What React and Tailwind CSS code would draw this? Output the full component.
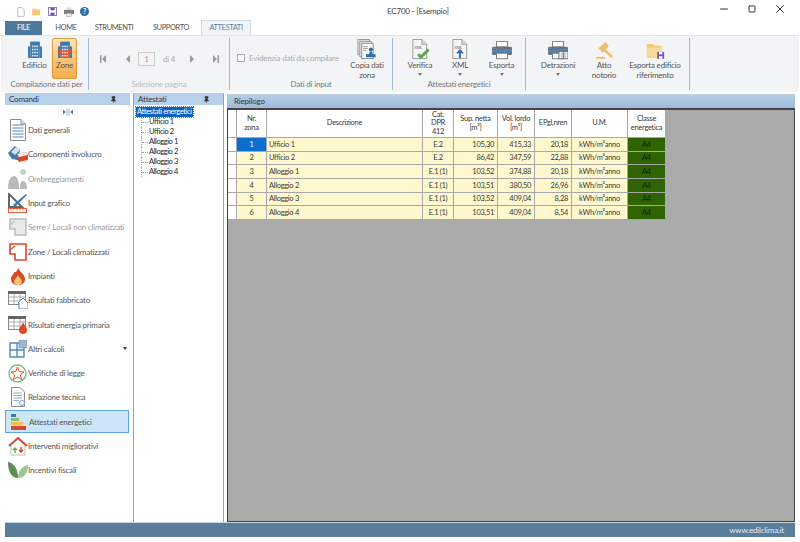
import React from "react";
import { Pin, Minus, Square, X } from "lucide-react";

const sans = "font-['Lato','Open_Sans',sans-serif] tracking-[-0.2px]";

// ---- icons ----
const Building = ({ zone }) => (
  <svg width="14" height="17" viewBox="0 0 18 22">
    <rect x="3" y="1" width="12" height="21" fill={zone ? "#d9542b" : "#3e79ad"} />
    <rect x="3" y="1" width="12" height="10" fill="#3e79ad" />
    <rect x="0" y="7" width="3" height="15" fill="#3e79ad" />
    <rect x="15" y="7" width="3" height="15" fill="#3e79ad" />
    {zone && <rect x="0" y="11" width="18" height="5" fill="#d9542b" />}
    {[5, 8, 11].map((x) =>
      [6, 10, 14, 18].map((y) => <rect key={`${x}-${y}`} x={x} y={y} width="2" height="2" fill="#e8eef5" />)
    )}
  </svg>
);

const XmlDoc = ({ children }) => (
  <svg width="20" height="21" viewBox="0 0 20 22">
    <path d="M2.5 .5H12L17 5.5V20.5H2.5Z" fill="#f4f4f4" stroke="#9a9a9a" />
    <path d="M12 .5V5.5H17" fill="#ddd" stroke="#9a9a9a" />
    <text x="4" y="10" fontSize="4.5" fill="#666" fontFamily="Liberation Sans">XML</text>
    {children}
  </svg>
);

const Printer = ({ extra }) => (
  <svg width="20" height="19" viewBox="0 0 22 20">
    <rect x="5" y="0" width="12" height="6" fill="#fff" stroke="#777" />
    <rect x="0" y="6" width="22" height="9" rx="1.5" fill="#6b7480" />
    <rect x="0" y="9" width="22" height="3" fill="#4d86bb" />
    <rect x="5" y="13" width="12" height="6" fill="#fff" stroke="#777" />
    {extra && <rect x="12" y="11" width="10" height="8" fill="#fff" stroke="#666" />}
    {extra && <path d="M14 13H20M14 15H20M14 17H20M17 11V19" stroke="#666" strokeWidth=".7" />}
  </svg>
);

const Gavel = () => (
  <svg width="19" height="19" viewBox="0 0 22 21">
    <path d="M4 8L12 1L16 5L9 13Z" fill="#f2bd6b" />
    <path d="M11 10L20 18" stroke="#f2bd6b" strokeWidth="3" />
    <rect x="1" y="18" width="11" height="2" fill="#f2bd6b" />
  </svg>
);

const FolderSave = () => (
  <svg width="19" height="18" viewBox="0 0 22 20">
    <path d="M1 2H8L10 4H18V18H1Z" fill="#f3c879" />
    <rect x="1" y="6" width="17" height="12" fill="#f7d999" />
    <rect x="13" y="11" width="8" height="8" fill="#7d4fb3" />
    <rect x="15" y="11" width="4" height="3" fill="#fff" />
    <rect x="15" y="16" width="4" height="3" fill="#fff" />
  </svg>
);

const CopyDoc = () => (
  <svg width="20" height="21" viewBox="0 0 20 22">
    <rect x="0.5" y="0.5" width="12" height="16" fill="#e2e2e2" stroke="#999" />
    <rect x="2.5" y="2.5" width="12" height="16" fill="#eee" stroke="#999" />
    <rect x="4.5" y="4.5" width="12" height="16" fill="#fafafa" stroke="#888" />
    <path d="M6 8H11M6 10H11M6 12H9" stroke="#888" strokeWidth=".8" />
    <circle cx="14" cy="11" r="2.2" fill="#2a6fb0" />
    <path d="M13 13H15L16 16H19V19H9V16H12Z" fill="#2a6fb0" />
  </svg>
);

const Doc = () => (
  <svg width="20" height="22" viewBox="0 0 20 22">
    <path d="M2.5 .5H13L17.5 5V21.5H2.5Z" fill="#fff" stroke="#8a8a8a" />
    <path d="M13 .5V5H17.5" fill="#e6e6e6" stroke="#8a8a8a" />
    {[6, 9, 12, 15, 18].map((y) => (
      <path key={y} d={`M4.5 ${y}H15.5`} stroke="#4e88c0" />
    ))}
  </svg>
);

const Involucro = () => (
  <svg width="20" height="16" viewBox="0 0 20 16">
    <path d="M0 7L7 0L12 4L10 14L4 13Z" fill="#3f79b0" />
    <path d="M3 6L8 1L12 4L7 9Z" fill="#cfe0ef" />
    <path d="M9 8L18 6L20 9V14L11 16L9 13Z" fill="#d94a2b" />
    <path d="M9 8L18 6L20 9L11 11Z" fill="#f2f2f2" />
  </svg>
);

const Ombre = () => (
  <svg width="20" height="20" viewBox="0 0 20 20">
    <circle cx="15" cy="3" r="3" fill="#cfcfcf" />
    <path d="M0 20C0 10 3 7 6 7C9 7 11 12 11 20Z" fill="#b9b9b9" />
    <path d="M12 20C12 14 13 12 15 12C18 12 19 16 19 20Z" fill="#b9b9b9" />
  </svg>
);

const InputGrafico = () => (
  <svg width="20" height="20" viewBox="0 0 20 20">
    <path d="M1 1V14H14Z" fill="none" stroke="#666" strokeWidth="2" />
    <path d="M5 12L18 1L19 2L7 14Z" fill="#3f79b0" />
    <rect x="0.5" y="15.5" width="18" height="4" fill="#fff" stroke="#e0603a" />
    <path d="M3 16V18M6 16V18M9 16V18M12 16V18M15 16V18" stroke="#e0603a" strokeWidth=".6" />
  </svg>
);

const Pianta = ({ color, fill }) => (
  <svg width="18" height="18" viewBox="0 0 18 18">
    <path d="M1 1H17V17H6V11H1Z" fill={fill} stroke={color} strokeWidth="1.6" />
    <path d="M1 7L6 3" stroke={color} strokeWidth="1.2" />
  </svg>
);

const Flame = () => (
  <svg width="16" height="18" viewBox="0 0 16 18">
    <path d="M8 0C9 5 15 7 15 12C15 16 12 18 8 18C4 18 1 16 1 12C1 8 4 8 4 5C6 6 8 3 8 0Z" fill="#dd4b22" />
    <path d="M8 8C9 11 12 12 12 15C12 17 10 18 8 18C6 18 4 17 4 15C4 12 7 11 8 8Z" fill="#f9c27a" />
  </svg>
);

const TableIcon = ({ children }) => (
  <svg width="20" height="18" viewBox="0 0 20 18">
    <rect x="0.5" y="0.5" width="17" height="13" fill="#fff" stroke="#888" />
    <rect x="0" y="0" width="18" height="3" fill="#666" />
    <path d="M0 6H18M0 10H18M6 3V14M12 3V14" stroke="#999" strokeWidth=".8" />
    {children}
  </svg>
);

const Altri = () => (
  <svg width="18" height="18" viewBox="0 0 18 18">
    <path d="M1 3H15V17H1ZM1 10H15M8 3V17" fill="#fff" stroke="#4e88c0" strokeWidth="1.4" />
    <rect x="10" y="0" width="8" height="8" fill="#9db7d3" stroke="#7a8fa6" strokeWidth=".6" />
  </svg>
);

const Verifiche = () => (
  <svg width="19" height="19" viewBox="0 0 19 19">
    <circle cx="9.5" cy="9.5" r="8.5" fill="none" stroke="#7fb77e" strokeWidth="1.4" />
    <path d="M9.5 3L11.3 7.6L16 8L12.4 11L13.6 15.6L9.5 13L5.4 15.6L6.6 11L3 8L7.7 7.6Z" fill="#fff" stroke="#d9542b" />
  </svg>
);

const Relazione = () => (
  <svg width="16" height="20" viewBox="0 0 16 20">
    <path d="M1.5 .5H10L14.5 5V19.5H1.5Z" fill="#fff" stroke="#8a8a8a" />
    <path d="M3.5 6H12M3.5 8.5H12M3.5 11H12M3.5 13.5H9" stroke="#6b9ac8" strokeWidth=".8" />
    <circle cx="12" cy="16" r="2.5" fill="#fff" stroke="#6b9ac8" />
  </svg>
);

const Energia = () => (
  <svg width="18" height="18" viewBox="0 0 18 18">
    <rect x="1" y="1" width="5" height="3" fill="#3f79b0" />
    <rect x="1" y="5" width="8" height="3" fill="#8dbb73" />
    <rect x="1" y="9" width="12" height="3" fill="#f0b95a" />
    <rect x="1" y="13" width="15" height="4" fill="#d9482b" />
  </svg>
);

const Interventi = () => (
  <svg width="20" height="19" viewBox="0 0 20 19">
    <path d="M3 8V18H17V8" fill="#fff" stroke="#bdbdbd" />
    <path d="M1 9L10 1L19 9" fill="none" stroke="#d9482b" strokeWidth="2" />
    <path d="M7 16V11M5 13L7 11L9 13" fill="none" stroke="#6aa84f" strokeWidth="1.4" />
    <path d="M13 10V15M11 13L13 15L15 13" fill="none" stroke="#d9482b" strokeWidth="1.4" />
  </svg>
);

const Leaves = () => (
  <svg width="20" height="18" viewBox="0 0 20 18">
    <path d="M10 17C3 17 0 10 0 1C6 2 10 8 10 17Z" fill="#5d8a55" />
    <path d="M10 17C17 17 20 11 20 4C14 5 10 10 10 17Z" fill="#9cc78e" />
  </svg>
);

const NavEnd = ({ flip }) => (
  <svg width="6" height="8" viewBox="0 0 6 8" className={flip ? "rotate-180" : ""}>
    <rect x="0" y="0" width="1.5" height="8" fill="#9a9a9a" />
    <path d="M6 0V8L2 4Z" fill="#9a9a9a" />
  </svg>
);

const NavArrow = ({ flip }) => (
  <svg width="4" height="8" viewBox="0 0 4 8" className={flip ? "rotate-180" : ""}>
    <path d="M4 0V8L0 4Z" fill="#9a9a9a" />
  </svg>
);

const Caret = ({ color = "#777" }) => (
  <svg width="4" height="3" viewBox="0 0 4 3">
    <path d="M0 0H4L2 3Z" fill={color} />
  </svg>
);

// ---- ribbon ----
const RibbonBtn = ({ icon, lines, caret, w }) => (
  <div className={`flex flex-col items-center shrink-0 ${w}`}>
    <div className="h-[22px] flex items-end justify-center">{icon}</div>
    <div className="text-[8px] leading-[10px] text-center text-[#555]">
      {lines.map((l) => (
        <div key={l} className="whitespace-nowrap">{l}</div>
      ))}
      {caret && <div className="h-[8px] flex items-center justify-center"><Caret /></div>}
    </div>
  </div>
);

const Group = ({ w, label, muted, children, className = "" }) => (
  <div className={`shrink-0 flex flex-col border-r border-[#9fb6cc] my-[2px] ${w}`}>
    <div className={`h-[41px] flex ${className}`}>{children}</div>
    <div className={`h-[11px] text-[8px] leading-[11px] text-center whitespace-nowrap ${muted ? "text-[#bbb]" : "text-[#777]"}`}>{label}</div>
  </div>
);

const Ribbon = () => (
  <div className="h-[57px] mx-[1px] pl-[4px] flex bg-[#f3f4f6] border-t border-[#e2e4e7] shrink-0">
    <Group w="w-[84px]" label="Compilazione dati per" className="items-start pl-[15px] gap-[3px]">
      <div className="w-[29px] flex flex-col items-center pt-[3px]">
        <Building />
        <div className="mt-[2px] text-[8px] leading-[10px] text-[#555]">Edificio</div>
      </div>
      <div className="w-[25px] h-[41px] flex flex-col items-center pt-[2px] rounded-[2px] border border-[#d99a3c] bg-gradient-to-b from-[#fbe3bd] via-[#fcc57c] to-[#f8ab4e]">
        <Building zone />
        <div className="mt-[2px] text-[8px] leading-[10px] text-[#555]">Zone</div>
      </div>
    </Group>
    <Group w="w-[141px]" label="Selezione pagina" muted className="items-center pl-[11px]">
      <NavEnd />
      <div className="ml-[20px] flex"><NavArrow /></div>
      <div className="ml-[8px] w-[17px] h-[14px] border border-[#ccc] bg-[#f5f5f5] text-[8px] leading-[12px] text-center text-[#999]">1</div>
      <div className="ml-[8px] text-[8px] text-[#aaa] whitespace-nowrap">di 4</div>
      <div className="ml-[15px] flex"><NavArrow flip /></div>
      <div className="ml-[19px] flex"><NavEnd flip /></div>
    </Group>
    <Group w="w-[163px]" label="Dati di input" className="items-start pl-[7px]">
      <div className="flex items-center h-[40px] w-[110px] shrink-0">
        <div className="w-[8px] h-[8px] border border-[#aaa] bg-white shrink-0" />
        <div className="ml-[4px] text-[8px] text-[#aaa] whitespace-nowrap">Evidenzia dati da compilare</div>
      </div>
      <RibbonBtn w="w-[40px]" icon={<CopyDoc />} lines={["Copia dati", "zona"]} />
    </Group>
    <Group w="w-[133px]" label="Attestati energetici" className="items-start pl-[7px]">
      <RibbonBtn
        w="w-[40px]"
        caret
        lines={["Verifica"]}
        icon={
          <XmlDoc>
            <path d="M8 16L11 19L19 11" fill="none" stroke="#57a845" strokeWidth="3" />
          </XmlDoc>
        }
      />
      <RibbonBtn
        w="w-[40px]"
        caret
        lines={["XML"]}
        icon={
          <XmlDoc>
            <path d="M10 20V14M7 15L10 12L13 15" fill="none" stroke="#2f6ea8" strokeWidth="2" />
          </XmlDoc>
        }
      />
      <RibbonBtn w="w-[43px]" caret lines={["Esporta"]} icon={<Printer />} />
    </Group>
    <Group w="w-[164px]" className="items-start pl-[10px]">
      <RibbonBtn w="w-[44px]" caret lines={["Detrazioni"]} icon={<Printer extra />} />
      <RibbonBtn w="w-[48px]" lines={["Atto", "notorio"]} icon={<Gavel />} />
      <RibbonBtn w="w-[54px]" lines={["Esporta edificio", "riferimento"]} icon={<FolderSave />} />
    </Group>
  </div>
);

// ---- side panels ----
const comandi = [
  { label: "Dati generali", icon: <Doc /> },
  { label: "Componenti involucro", icon: <Involucro /> },
  { label: "Ombreggiamenti", icon: <Ombre />, muted: true },
  { label: "Input grafico", icon: <InputGrafico /> },
  { label: "Serre / Locali non climatizzati", icon: <Pianta color="#bdbdbd" fill="#e9e9e9" />, muted: true },
  { label: "Zone / Locali climatizzati", icon: <Pianta color="#d9482b" fill="#fff" /> },
  { label: "Impianti", icon: <Flame /> },
  {
    label: "Risultati fabbricato",
    icon: (
      <TableIcon>
        <path d="M10 12L15 7L20 12V18H11V12Z" fill="#fff" stroke="#4e88c0" />
      </TableIcon>
    ),
  },
  {
    label: "Risultati energia primaria",
    icon: (
      <TableIcon>
        <path d="M15 6C16 9 19 11 19 14C19 17 17 18 15 18C13 18 11 17 11 14C11 11 14 10 15 6Z" fill="#dd4b22" />
      </TableIcon>
    ),
  },
  { label: "Altri calcoli", icon: <Altri />, caret: true },
  { label: "Verifiche di legge", icon: <Verifiche /> },
  { label: "Relazione tecnica", icon: <Relazione /> },
  { label: "Attestati energetici", icon: <Energia />, active: true },
  { label: "Interventi migliorativi", icon: <Interventi /> },
  { label: "Incentivi fiscali", icon: <Leaves /> },
];

const PanelHeader = ({ title }) => (
  <div className="h-[12px] bg-[#b9d0ea] flex items-center justify-between pl-[4px] pr-[13px] text-[8px] text-[#333] shrink-0">
    <span>{title}</span>
    <Pin size={7} className="fill-[#333] text-[#333]" />
  </div>
);

const Comandi = () => (
  <div className="w-[125px] ml-[5px] shrink-0 flex flex-col">
    <PanelHeader title="Comandi" />
    <div className="h-[13px] flex items-center justify-center">
      <svg width="10" height="8" viewBox="0 0 10 8">
        <path d="M0 1.5L3 4L0 6.5Z" fill="#4e88c0" />
        <path d="M10 1.5L7 4L10 6.5Z" fill="#4e88c0" />
        <path d="M4 .5V7.5M6 .5V7.5" stroke="#8a9aa8" strokeWidth=".8" />
      </svg>
    </div>
    {comandi.map((c) => (
      <div key={c.label} className="h-[24.3px] w-[124px] flex items-center shrink-0">
        <div
          className={`h-[22.6px] w-full flex items-center text-[8px] whitespace-nowrap relative ${
            c.active ? "bg-[#cde6f7] border border-[#5ba5e6]" : ""
          } ${c.muted ? "text-[#999]" : "text-[#555]"}`}
        >
          <div className="w-[23px] flex justify-center shrink-0 pl-[2px]">{c.icon}</div>
          <span>{c.label}</span>
          {c.caret && <span className="absolute right-[2px] flex"><Caret color="#333" /></span>}
        </div>
      </div>
    ))}
  </div>
);

const zone = ["Ufficio 1", "Ufficio 2", "Alloggio 1", "Alloggio 2", "Alloggio 3", "Alloggio 4"];

const Albero = () => (
  <div className="w-[91px] ml-[3px] shrink-0 flex flex-col border-x-[1.5px] border-[#a0a0a0] bg-white">
    <PanelHeader title="Attestati" />
    <div className="pl-[2px] pt-[2px] text-[7.5px] tracking-[-0.4px]">
      <div className="w-fit h-[10px] px-[1px] leading-[10px] bg-[#0a63c4] text-white outline-1 outline-dotted outline-[#b8692a]">Attestati energetici</div>
      {zone.map((z) => (
        <div key={z} className="h-[10px] flex items-center text-[#222]">
          <span className="ml-[5px] w-[7px] h-[10px] border-l border-dotted border-[#aaa] flex items-center">
            <span className="w-full border-t border-dotted border-[#aaa]" />
          </span>
          <span className="ml-[1px]">{z}</span>
        </div>
      ))}
    </div>
  </div>
);

// ---- riepilogo table ----
const righe = [
  ["1", "Ufficio 1", "E.2", "105,30", "415,33", "20,18"],
  ["2", "Ufficio 2", "E.2", "86,42", "347,59", "22,88"],
  ["3", "Alloggio 1", "E.1 (1)", "103,52", "374,88", "20,18"],
  ["4", "Alloggio 2", "E.1 (1)", "103,51", "380,50", "26,96"],
  ["5", "Alloggio 3", "E.1 (1)", "103,52", "409,04", "8,28"],
  ["6", "Alloggio 4", "E.1 (1)", "103,51", "409,04", "8,54"],
];

const colonne = "grid grid-cols-[9px_30px_156px_31px_44px_37px_37px_56px_38px]";
const cellBase = "border-r border-b border-[#a8a8a8] flex items-center";

const Riepilogo = () => (
  <div className="flex-1 ml-[3px] mr-[5px] flex flex-col min-w-0">
    <div className="h-[14px] mt-[1px] bg-gradient-to-b from-[#b9cfe6] to-[#9dbad8] flex items-center pl-[7px] text-[8px] text-[#333] shrink-0">Riepilogo</div>
    <div className="flex-1 bg-[#ababab] border border-[#444] border-t-2 text-[7.5px] tracking-[-0.3px] text-[#3a3a3a]">
      <div className={`${colonne} w-fit h-[28px] bg-white text-center leading-[8.5px]`}>
        <div className={cellBase}></div>
        <div className={`${cellBase} justify-center`}><div>Nr.<br />zona</div></div>
        <div className={`${cellBase} justify-center`}>Descrizione</div>
        <div className={`${cellBase} justify-center`}><div>Cat.<br />DPR<br />412</div></div>
        <div className={`${cellBase} justify-center`}><div>Sup. netta<br />[m²]</div></div>
        <div className={`${cellBase} justify-center`}><div>Vol. lordo<br />[m³]</div></div>
        <div className={`${cellBase} justify-center`}>EPgl,nren</div>
        <div className={`${cellBase} justify-center`}>U.M.</div>
        <div className={`${cellBase} justify-center`}><div>Classe<br />energetica</div></div>
      </div>
      {righe.map((r, i) => (
        <div key={r[0]} className={`${colonne} w-fit h-[13.7px] bg-[#fff8cf]`}>
          <div className={`${cellBase} bg-white`}></div>
          <div className={`${cellBase} justify-center ${i === 0 ? "bg-[#0a6fd0] text-white" : ""}`}>{r[0]}</div>
          <div className={`${cellBase} pl-[2px]`}>{r[1]}</div>
          <div className={`${cellBase} justify-center`}>{r[2]}</div>
          <div className={`${cellBase} justify-end pr-[3px]`}>{r[3]}</div>
          <div className={`${cellBase} justify-end pr-[3px]`}>{r[4]}</div>
          <div className={`${cellBase} justify-end pr-[3px]`}>{r[5]}</div>
          <div className={`${cellBase} justify-center`}>kWh/m²anno</div>
          <div className={`${cellBase} justify-center bg-[#2f6400] text-[#10220a]`}>A4</div>
        </div>
      ))}
    </div>
  </div>
);

export default function App() {
  return (
    <div className={`w-[800px] h-[542px] bg-white flex flex-col overflow-hidden ${sans}`}>
      {/* barra titolo */}
      <div className="h-[20px] flex items-center relative shrink-0">
        <div className="flex items-center gap-[6.5px] pl-[17px] pt-[3px]">
          <svg width="8" height="10" viewBox="0 0 10 12"><path d="M1 .5H6L9 3.5V11.5H1Z" fill="#fff" stroke="#aaa" /></svg>
          <svg width="10" height="8" viewBox="0 0 12 10"><path d="M0 1H5L6 2H10V9H0Z" fill="#f3c879" /></svg>
          <svg width="9" height="9" viewBox="0 0 11 11"><path d="M.5 .5H10.5V10.5H.5Z" fill="#fff" stroke="#6a4fa8" /><rect x="3" y="1" width="5" height="3" fill="#6a4fa8" /><rect x="3" y="7" width="5" height="3" fill="#6a4fa8" /></svg>
          <svg width="10" height="10" viewBox="0 0 12 11"><rect x="3" y="0" width="6" height="4" fill="#ddd" /><rect x="0" y="3" width="12" height="5" fill="#7a7f86" /><rect x="3" y="7" width="6" height="4" fill="#eee" stroke="#888" strokeWidth=".5" /></svg>
          <div className="w-[9px] h-[9px] rounded-full bg-[#2f6ea8] text-white text-[7px] leading-[9px] text-center font-bold">?</div>
        </div>
        <div className="absolute left-[387px] top-[5px] text-[8px] leading-[12px] text-[#444]">EC700 - [Esempio]</div>
        <div className="ml-auto flex items-center pr-[6px] pb-[2px] text-[#333]">
          <div className="w-[28px] flex justify-center"><Minus size={12} strokeWidth={2} /></div>
          <div className="w-[28px] flex justify-center"><Square size={8} strokeWidth={3} /></div>
          <div className="w-[28px] flex justify-center"><X size={14} strokeWidth={1.7} /></div>
        </div>
      </div>
      {/* tab */}
      <div className="h-[15px] flex pl-[5px] text-[7.5px] tracking-[-0.4px] shrink-0">
        <div className="w-[37px] mt-[1px] bg-[#4d7a9c] text-white flex items-center justify-center">FILE</div>
        <div className="w-[38px] ml-[5px] flex items-center justify-center text-[#555]">HOME</div>
        <div className="w-[46px] ml-[6px] flex items-center justify-center text-[#555]">STRUMENTI</div>
        <div className="w-[42px] ml-[13px] flex items-center justify-center text-[#555]">SUPPORTO</div>
        <div className="w-[50px] ml-[9px] flex items-center justify-center text-[#5b7f9b] bg-[#f3f4f6] border border-b-0 border-[#d5d8dc]">ATTESTATI</div>
      </div>
      <Ribbon />
      {/* contenuto */}
      <div className="flex-1 flex min-h-0 pt-[1px]">
        <Comandi />
        <Albero />
        <Riepilogo />
      </div>
      <div className="h-[15px] mb-[5px] mx-[5px] bg-[#5a7d9c] border-t border-[#c5d3de] flex items-center justify-end pr-[11px] text-[8px] text-[#e4ebf1] shrink-0">www.edilclima.it</div>
    </div>
  );
}
